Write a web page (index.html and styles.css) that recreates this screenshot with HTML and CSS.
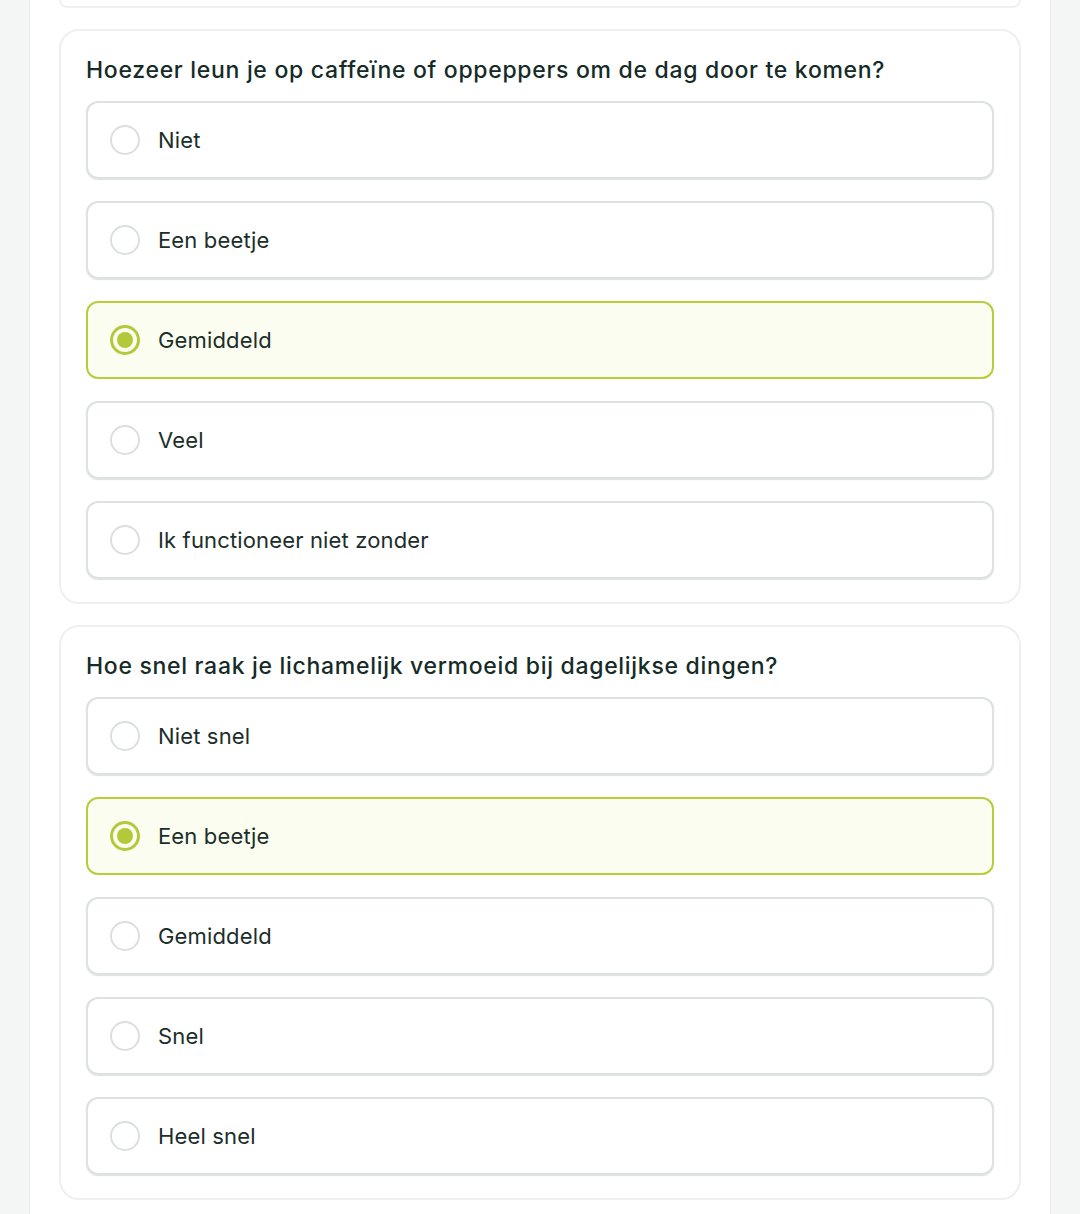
FILE: index.html
```html
<!DOCTYPE html>
<html lang="nl">
<head>
    <meta charset="UTF-8">
    <meta name="viewport" content="width=device-width, initial-scale=1.0">
    <title>Vragenlijst</title>
    <link rel="stylesheet" href="styles.css">
</head>
<body>
    <div class="container">
        <div class="card card-prev"></div>

        <div class="card">
            <h2 class="vraag">Hoezeer leun je op caffeïne of oppeppers om de dag door te komen?</h2>
            <div class="opties">
                <label class="optie"><span class="radio"></span>Niet</label>
                <label class="optie"><span class="radio"></span>Een beetje</label>
                <label class="optie gekozen"><span class="radio"></span>Gemiddeld</label>
                <label class="optie"><span class="radio"></span>Veel</label>
                <label class="optie"><span class="radio"></span>Ik functioneer niet zonder</label>
            </div>
        </div>

        <div class="card">
            <h2 class="vraag">Hoe snel raak je lichamelijk vermoeid bij dagelijkse dingen?</h2>
            <div class="opties">
                <label class="optie"><span class="radio"></span>Niet snel</label>
                <label class="optie gekozen"><span class="radio"></span>Een beetje</label>
                <label class="optie"><span class="radio"></span>Gemiddeld</label>
                <label class="optie"><span class="radio"></span>Snel</label>
                <label class="optie"><span class="radio"></span>Heel snel</label>
            </div>
        </div>
    </div>
</body>
</html>
```

FILE: styles.css
```css
body {
    font-family: Inter, "Noto Sans", sans-serif;
    background-color: #f4f5f5;
    margin: 0;
    color: #152b27;
}
.container {
    width: 962px;
    margin-left: 29px;
    padding: 0 29px;
    background-color: #ffffff;
    border-left: 1px solid #eceeee;
    border-right: 1px solid #eceeee;
    display: flex;
    flex-direction: column;
    gap: 21px;
    min-height: 1214px;
    box-sizing: content-box;
}
.card {
    border: 2px solid #eef0f0;
    border-radius: 20px;
    padding: 22px 25px 23px;
}
.card-prev {
    height: 6px;
    padding: 0;
    border-top: none;
    border-radius: 0 0 20px 20px;
}
.vraag {
    margin: 0 0 14px;
    font-size: 23px;
    line-height: 34px;
    font-weight: 500;
    letter-spacing: 0.7px;
}
.opties {
    display: flex;
    flex-direction: column;
    gap: 22px;
}
.optie {
    height: 78px;
    box-sizing: border-box;
    border: 2px solid #dde1e1;
    border-radius: 12px;
    box-shadow: 0 1px 1px #dde1e1;
    display: flex;
    align-items: center;
    padding-left: 22px;
    font-size: 22px;
    letter-spacing: 0.15px;
    color: #1c2e2a;
    cursor: pointer;
}
.radio {
    width: 30px;
    height: 30px;
    box-sizing: border-box;
    border: 2px solid #dcdfdf;
    border-radius: 50%;
    margin-right: 18px;
    display: flex;
    justify-content: center;
    align-items: center;
}
.gekozen {
    background-color: #fbfdf0;
    border: 2.5px solid #b9cd3c;
    box-shadow: none;
}
.gekozen .radio {
    border: 3px solid #b4c93a;
}
.gekozen .radio::after {
    content: "";
    width: 16px;
    height: 16px;
    border-radius: 50%;
    background-color: #b4c93a;
}
```
